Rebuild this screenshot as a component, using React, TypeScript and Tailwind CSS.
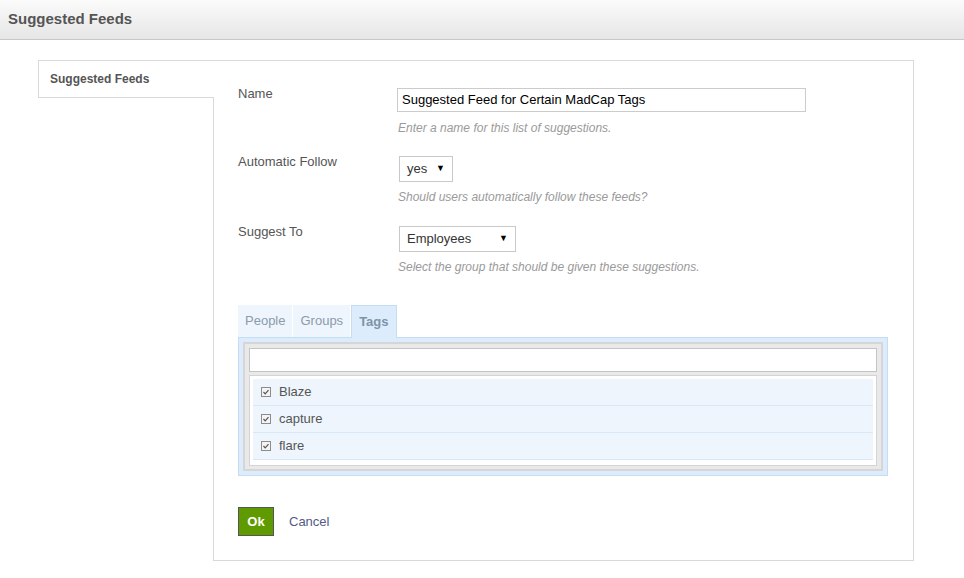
import { useState } from "react";

const tags = ["Blaze", "capture", "flare"];

function CheckMark() {
  return (
    <svg width="10" height="10" viewBox="0 0 10 10" className="shrink-0">
      <rect x="0.5" y="0.5" width="9" height="9" fill="#f4f4f4" stroke="#8c8c8c" />
      <path d="M2.5 5 L4.2 6.8 L7.5 3.2" fill="none" stroke="#555" strokeWidth="1.2" />
    </svg>
  );
}

function FakeSelect({ value, width }: { value: string; width: string }) {
  return (
    <div
      className={`ml-[2px] flex h-[26px] items-center justify-between border border-[#c9c9c9] bg-white pl-[7px] pr-[7px] text-[13px] text-[#333] ${width}`}
    >
      <span>{value}</span>
      <span className="text-[9px] text-black">▼</span>
    </div>
  );
}

export default function App() {
  const [tab, setTab] = useState("Tags");

  return (
    <div className="min-h-screen bg-white font-['Liberation_Sans',Arial,sans-serif] text-[13px] text-[#555]">
      {/* Title bar */}
      <div className="flex h-10 items-center border-b border-[#c8c8c8] bg-gradient-to-b from-[#fbfbfb] to-[#e6e6e6] px-2">
        <h1 className="text-[15px] font-bold text-[#555]">Suggested Feeds</h1>
      </div>

      <div className="flex pl-[38px] pt-5">
        {/* Side tab */}
        <div className="relative z-10 -mr-px flex h-[38px] w-[176px] shrink-0 items-center border-t border-b border-l border-[#d9d9d9] bg-white pl-[11px] text-[12px] font-bold text-[#555]">
          Suggested Feeds
        </div>

        {/* Form panel */}
        <div className="w-[701px] border border-[#d9d9d9] pl-6 pt-[25px] pb-[24px]">
          <div className="flex">
            <div className="w-[159px] leading-4">Name</div>
            <div className="pt-[2px]">
              <div className="flex h-[24px] w-[409px] items-center border border-[#cccccc] px-[4px] text-[13px] text-black">
                Suggested Feed for Certain MadCap Tags
              </div>
              <div className="mt-[8px] pl-px text-[12px] italic leading-4 text-[#9a9a9a]">
                Enter a name for this list of suggestions.
              </div>
            </div>
          </div>

          <div className="mt-[18px] flex">
            <div className="w-[159px] leading-4">Automatic Follow</div>
            <div className="pt-[2px]">
              <FakeSelect value="yes" width="w-[54px]" />
              <div className="mt-[7px] pl-px text-[12px] italic leading-4 text-[#9a9a9a]">
                Should users automatically follow these feeds?
              </div>
            </div>
          </div>

          <div className="mt-[19px] flex">
            <div className="w-[159px] leading-4">Suggest To</div>
            <div className="pt-[2px]">
              <FakeSelect value="Employees" width="w-[117px]" />
              <div className="mt-[7px] pl-px text-[12px] italic leading-4 text-[#9a9a9a]">
                Select the group that should be given these suggestions.
              </div>
            </div>
          </div>

          {/* Tabs */}
          <div className="mt-[30px] w-[650px]">
            <div className="flex h-[32px] gap-px">
              {["People", "Groups", "Tags"].map((t) => (
                <button
                  key={t}
                  onClick={() => setTab(t)}
                  className={
                    t === tab
                      ? "relative z-10 -mb-px flex h-[33px] items-center border border-b-0 border-[#c6dcf0] bg-[#ddecfc] px-[7px] font-bold text-[#7d93a8]"
                      : "flex h-[32px] items-center bg-[#eef5fd] px-[7px] text-[#8b9bab]"
                  }
                >
                  {t}
                </button>
              ))}
            </div>
            <div className="border border-[#c6dcf0] bg-[#ddecfc] p-[4px]">
              <div className="border-2 border-[#d6d6d6] bg-[#e9e9e9] px-[4px] pt-[4px] pb-[3px]">
                <input
                  className="block h-[24px] w-full border border-[#c4c4c4] bg-white px-1 outline-none"
                  defaultValue=""
                />
                <div className="mt-[3px] border border-[#d4d4d4] bg-white px-[3px] pt-[3px] pb-[5px]">
                  {tags.map((t) => (
                    <div
                      key={t}
                      className="flex h-[27px] items-center gap-[8px] border-b border-[#d7e8f8] bg-[#eef5fd] pl-[8px] text-[13px] text-[#555]"
                    >
                      <CheckMark />
                      <span>{t}</span>
                    </div>
                  ))}
                </div>
              </div>
            </div>
          </div>

          {/* Actions */}
          <div className="mt-[31px] flex items-center gap-[15px]">
            <button className="h-[29px] w-[36px] border border-[#555] bg-[#5f9a00] text-[13px] font-bold text-white">
              Ok
            </button>
            <span className="text-[#535a86]">Cancel</span>
          </div>
        </div>
      </div>
    </div>
  );
}
